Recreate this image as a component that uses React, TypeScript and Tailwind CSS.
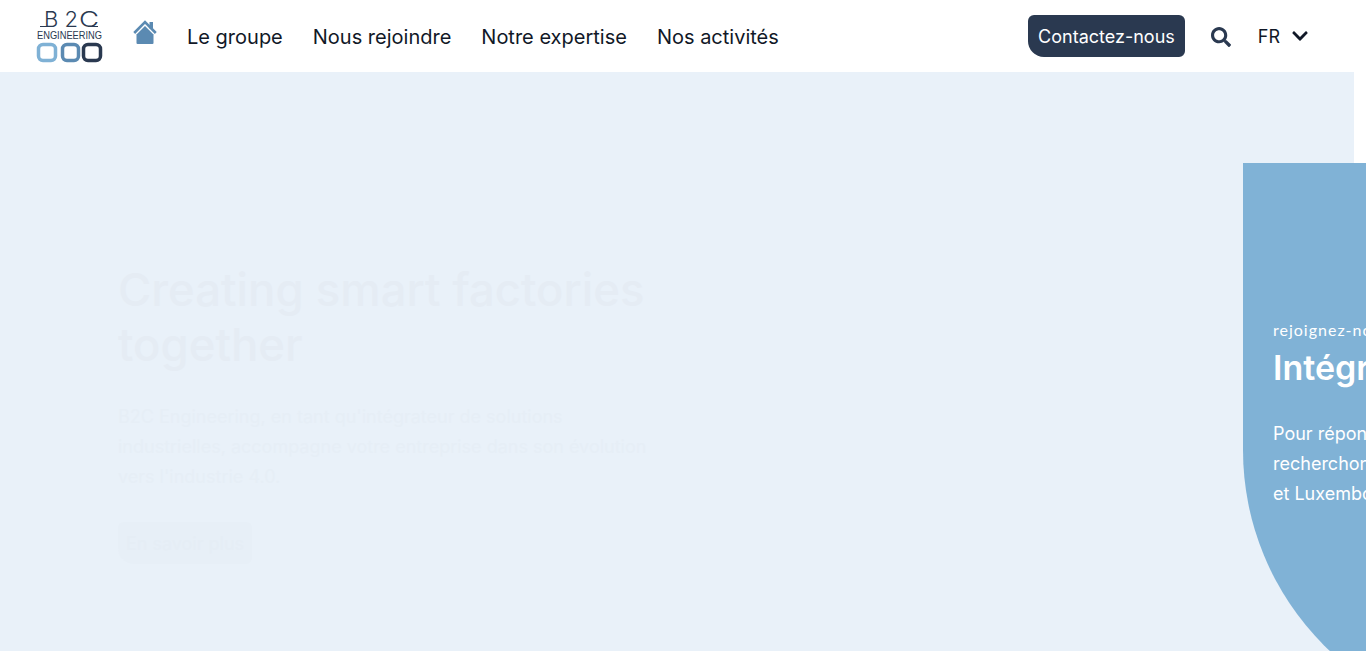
import { FaSearch, FaChevronDown } from "react-icons/fa";

const links = ["Le groupe", "Nous rejoindre", "Notre expertise", "Nos activités"];

function Logo() {
  return (
    <svg width="68" height="54" viewBox="0 0 68 54" className="shrink-0">
      <g fontFamily="Inter, sans-serif" fontSize="22" fontWeight="300" fill="#2a3950">
        <text x="8" y="18">B</text>
        <text x="28.5" y="18">2</text>
        <text transform="translate(43 18) scale(1.25 1)">C</text>
      </g>
      <path d="M4 17.5H12M52 17.5H62" stroke="#2a3950" strokeWidth="1.2" />
      <text x="1" y="30" fontFamily="'Liberation Sans', sans-serif" fontSize="11" fill="#2a3950" textLength="65" lengthAdjust="spacingAndGlyphs">ENGINEERING</text>
      <rect x="2.5" y="35.5" width="17" height="16" rx="4.5" fill="none" stroke="#7fb1d5" strokeWidth="3.5" />
      <rect x="26.5" y="35.5" width="16" height="16" rx="4.5" fill="none" stroke="#5b8ab2" strokeWidth="3.5" />
      <rect x="47.5" y="35.5" width="17" height="16" rx="4.5" fill="none" stroke="#2a3950" strokeWidth="3.5" />
    </svg>
  );
}

function HomeIcon() {
  return (
    <svg width="24" height="25" viewBox="0 0 24 25" className="ml-[29px] mb-[8px] shrink-0 text-[#5b8ab2]">
      <path d="M1.2 13 12 2l10.8 11" fill="none" stroke="currentColor" strokeWidth="2.6" />
      <path d="M16.5 2h3.5v6.5h-3.5z" fill="currentColor" />
      <path d="M3.5 14.5 12 6l8.5 8.5V23a1 1 0 0 1-1 1h-15a1 1 0 0 1-1-1z" fill="currentColor" />
    </svg>
  );
}

export default function App() {
  return (
    <div className="h-screen w-full overflow-hidden bg-white font-['Inter',sans-serif]">
      <header className="flex h-[72px] w-[1354px] items-center pl-[36px] pr-[45px]">
        <Logo />
        <HomeIcon />
        <nav className="ml-[30px] mt-[1px] flex gap-[30px] text-[20px] text-[#111827]">
          {links.map(l => (
            <a key={l}>{l}</a>
          ))}
        </nav>
        <button className="ml-auto h-[42px] rounded-md rounded-bl-2xl bg-[#2a3950] px-[10px] text-[18px] text-white">
          Contactez-nous
        </button>
        <FaSearch className="ml-[26px] mt-[1px] text-[#2a3950]" size={20} />
        <span className="ml-[27px] mt-[1px] text-[18px] text-[#111827]">FR</span>
        <FaChevronDown className="ml-[11px] text-[#111827]" size={18} />
      </header>

      <main className="flex h-[579px] w-[1354px] bg-[#e9f1f9]">
        <section className="w-[1243px] shrink-0 pl-[118px] pt-[190px]">
          <h1 className="w-[560px] text-[45.5px] leading-[55px] font-medium text-[#e5ecf4]">
            Creating smart factories together
          </h1>
          <p className="mt-[30px] w-[540px] text-[18px] leading-[30px] text-[#e6eef6]">
            B2C Engineering, en tant qu'intégrateur de solutions industrielles, accompagne votre entreprise dans son évolution vers l'industrie 4.0.
          </p>
          <button className="mt-[30px] h-[42px] w-[134px] rounded-md rounded-bl-2xl bg-[#e7eff7] text-[18px] text-[#e5edf5]">
            En savoir plus
          </button>
        </section>
        <aside className="mt-[91px] h-[563px] w-[500px] shrink-0 rounded-bl-[276px] bg-[#80b2d6] pl-[30px] pt-[157px] text-white">
          <div className="font-['Lato',sans-serif] text-[16px] leading-[20px] tracking-[1px]">rejoignez-nous</div>
          <h2 className="mt-[6px] text-[34px] leading-[44px] font-semibold whitespace-nowrap">Intégrez nos équipes</h2>
          <p className="mt-[29px] w-[460px] text-[18px] leading-[30px]">
            Pour répondre à notre croissance, nous
            <br />
            recherchons de nouveaux talents en France
            <br />
            et Luxembourg.
          </p>
        </aside>
      </main>
    </div>
  );
}
